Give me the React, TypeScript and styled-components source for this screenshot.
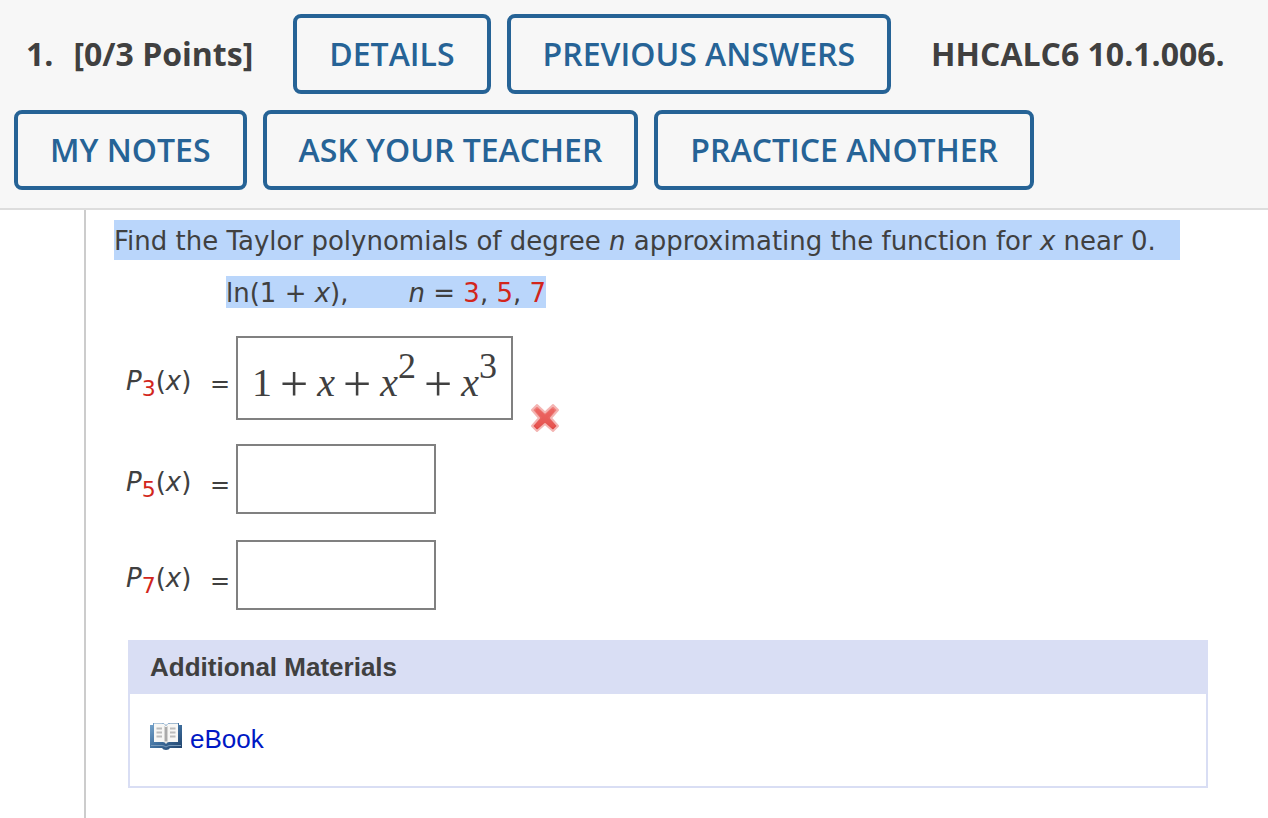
import React from "react";
import styled, { createGlobalStyle } from "styled-components";

const GlobalStyle = createGlobalStyle`
  *, *::before, *::after { box-sizing: border-box; }
  body {
    margin: 0;
    background: #fff;
    color: #404040;
    font-family: Verdana, "DejaVu Sans", sans-serif;
    font-size: 26px;
  }
`;

const Page = styled.div`
  display: flex;
  flex-direction: column;
  min-height: 100vh;
`;

const Header = styled.header`
  display: flex;
  flex-wrap: wrap;
  align-items: center;
  gap: 16px;
  padding: 14px 14px 18px;
  background: #f7f7f7;
  border-bottom: 2px solid #ddd;
  font-family: "Open Sans", sans-serif;
  font-size: 32px;
`;

const Title = styled.h1`
  display: flex;
  gap: 20px;
  margin: 0;
  padding: 0 24px 0 12px;
  font-size: 32px;
  font-weight: 700;
  line-height: 44px;
`;

const Code = styled.strong`
  padding-left: 24px;
  line-height: 44px;
`;

const ActionButton = styled.button`
  height: 80px;
  padding: 0 32px 2px;
  border: 4px solid #266396;
  border-radius: 8px;
  background: #f7f7f7;
  color: #266396;
  font: 600 32px "Open Sans", sans-serif;
  white-space: nowrap;
  cursor: pointer;
`;

const Main = styled.main`
  flex: 1;
  margin-left: 84px;
  padding: 10px 60px 30px 28px;
  border-left: 2px solid #ccc;
`;

const Prompt = styled.p`
  margin: 0 0 16px;
  line-height: 38px;
`;

const Formula = styled.p`
  margin: 0 0 28px;
  padding-left: 112px;
  line-height: 30px;
`;

const Selected = styled.span<{ $tail?: boolean }>`
  display: inline-block;
  vertical-align: top;
  padding: 2px ${(p) => (p.$tail ? 16 : 0)}px 0 0;
  background: #bad6fb;
  white-space: pre-wrap;
`;

const Degree = styled.span`
  padding-left: 60px;
`;

const Num = styled.span`
  color: #d2261c;
`;

const Row = styled.div`
  display: flex;
  align-items: flex-start;
  min-height: 96px;
  padding-left: 12px;
`;

const Answer = styled.div`
  display: flex;
  align-items: center;
`;

const Label = styled.label`
  display: flex;
  justify-content: space-between;
  width: 104px;
  margin-right: 6px;
  padding-top: 8px;
  line-height: 32px;
  white-space: nowrap;
`;

const Equals = styled.span`
  padding-top: 3px;
  font-size: 24px;
`;

const Sub = styled.sub`
  color: #d2261c;
  font-size: 22px;
  line-height: 0;
  vertical-align: -6px;
`;

const Field = styled.input`
  width: 200px;
  height: 70px;
  padding: 0 14px;
  border: 2px solid #808080;
  border-radius: 0;
  background: #fff;
  color: #404040;
  font: 40px "Liberation Serif", serif;
`;

const MathField = styled.div`
  display: flex;
  align-items: baseline;
  height: 84px;
  padding: 23px 14px 0;
  border: 2px solid #808080;
  font: 40px/44px "Liberation Serif", serif;
  white-space: nowrap;
`;

const Op = styled.span`
  align-self: flex-start;
  padding: 0 9px 0 8px;
  font-size: 50px;
  line-height: 46px;
`;

const Sup = styled.sup`
  font-size: 36px;
  line-height: 0;
  vertical-align: 18px;
`;

const Mark = styled.span`
  display: flex;
  padding: 66px 0 10px 16px;
`;

const Materials = styled.section`
  margin: 4px 0 0 14px;
  border: 2px solid #d9def4;
  font-family: "Liberation Sans", Arial, sans-serif;
`;

const MaterialsTitle = styled.h2`
  margin: 0;
  padding: 9px 20px 11px;
  background: #d9def4;
  font-size: 26px;
  line-height: 32px;
`;

const MaterialsBody = styled.div`
  display: flex;
  padding: 27px 20px 29px;
`;

const BookLink = styled.a`
  display: flex;
  align-items: flex-start;
  gap: 8px;
  color: #0018c4;
  line-height: 36px;
  text-decoration: none;
`;

const WrongIcon = () => (
  <svg width="32" height="32" viewBox="0 0 32 32" role="img" aria-label="Incorrect">
    <defs>
      <linearGradient id="wrong" x1="0" y1="0" x2="0" y2="1">
        <stop offset="0" stopColor="#f28a86" />
        <stop offset="1" stopColor="#df403d" />
      </linearGradient>
    </defs>
    <path
      d="M8 3 L16 10.500 L24 3 L29 8 L22 16 L29 24 L24 29 L16 22 L8 29 L3 24 L10 16 L3 8 Z"
      fill="url(#wrong)"
      stroke="#f4b5b3"
      strokeWidth="2"
      strokeLinejoin="round"
    />
    <path d="M8.500 8.500 L23.500 23.500 M23.500 8.500 L8.500 23.500" stroke="#ea5855" strokeOpacity="0.6" strokeWidth="4" strokeLinecap="round" />
  </svg>
);

const BookIcon = () => (
  <svg width="32" height="32" viewBox="0 0 32 32" aria-hidden="true">
    <defs>
      <linearGradient id="cover" x1="0" y1="0" x2="1" y2="1">
        <stop offset="0" stopColor="#78a6cd" />
        <stop offset="0.5" stopColor="#3f6f9e" />
        <stop offset="1" stopColor="#1d3f68" />
      </linearGradient>
    </defs>
    <path d="M0 4 H3 V2 H13 L16 4 L19 2 H29 V4 H32 V27 H20 Q19 29 16 29 Q13 29 12 27 H0 Z" fill="url(#cover)" />
    <path d="M1 24.500 H12 Q14 24.500 16 26 Q18 24.500 20 24.500 H31" fill="none" stroke="#7799b9" strokeWidth="1" />
    <path d="M4 2.500 H12 Q15 2.500 16 5 Q17 2.500 20 2.500 H28 V21 H19 Q17 21 16 23 Q15 21 13 21 H4 Z" fill="#f7f7f5" />
    <path d="M14 5 Q15.500 5 16 7 Q16.500 5 18 5 V20 L16 22 L14 20 Z" fill="#d3d3d1" />
    <path d="M16 6 V20" stroke="#aaa" strokeWidth="2" />
    <path d="M6.500 7.500 H12 M6.500 11.500 H12 M6.500 15.500 H12 M20 7.500 H25.500 M20 11.500 H25.500 M20 15.500 H25.500" stroke="#bcbcbc" strokeWidth="2" />
  </svg>
);

const PolyLabel = ({ degree, id }: { degree: number; id: string }) => (
  <Label id={`${id}-label`} htmlFor={id}>
    <span>
      <i>P</i>
      <Sub>{degree}</Sub>(<i>x</i>)
    </span>
    <Equals>=</Equals>
  </Label>
);

export default function App() {
  return (
    <>
      <GlobalStyle />
      <Page>
        <Header>
          <Title>
            <span>1.</span>
            <span>[0/3 Points]</span>
          </Title>
          <ActionButton type="button">DETAILS</ActionButton>
          <ActionButton type="button">PREVIOUS ANSWERS</ActionButton>
          <Code>HHCALC6 10.1.006.</Code>
          <ActionButton type="button">MY NOTES</ActionButton>
          <ActionButton type="button">ASK YOUR TEACHER</ActionButton>
          <ActionButton type="button">PRACTICE ANOTHER</ActionButton>
        </Header>
        <Main>
          <Prompt>
            <Selected $tail>
              Find the Taylor polynomials of degree <i>n</i> approximating the function for <i>x</i> near 0.{" "}
            </Selected>
          </Prompt>
          <Formula>
            <Selected>
              ln(1 + <i>x</i>),
              <Degree>
                <i>n</i> = <Num>3</Num>, <Num>5</Num>, <Num>7</Num>
              </Degree>
            </Selected>
          </Formula>
          <Row>
            <Answer>
              <PolyLabel degree={3} id="p3" />
              <MathField id="p3" role="textbox" tabIndex={0} aria-labelledby="p3-label">
                <span>1</span>
                <Op>+</Op>
                <i>x</i>
                <Op>+</Op>
                <span>
                  <i>x</i>
                  <Sup>2</Sup>
                </span>
                <Op>+</Op>
                <span>
                  <i>x</i>
                  <Sup>3</Sup>
                </span>
              </MathField>
            </Answer>
            <Mark>
              <WrongIcon />
            </Mark>
          </Row>
          <Row>
            <Answer>
              <PolyLabel degree={5} id="p5" />
              <Field id="p5" type="text" />
            </Answer>
          </Row>
          <Row>
            <Answer>
              <PolyLabel degree={7} id="p7" />
              <Field id="p7" type="text" />
            </Answer>
          </Row>
          <Materials>
            <MaterialsTitle>Additional Materials</MaterialsTitle>
            <MaterialsBody>
              <BookLink href="#ebook">
                <BookIcon />
                eBook
              </BookLink>
            </MaterialsBody>
          </Materials>
        </Main>
      </Page>
    </>
  );
}
